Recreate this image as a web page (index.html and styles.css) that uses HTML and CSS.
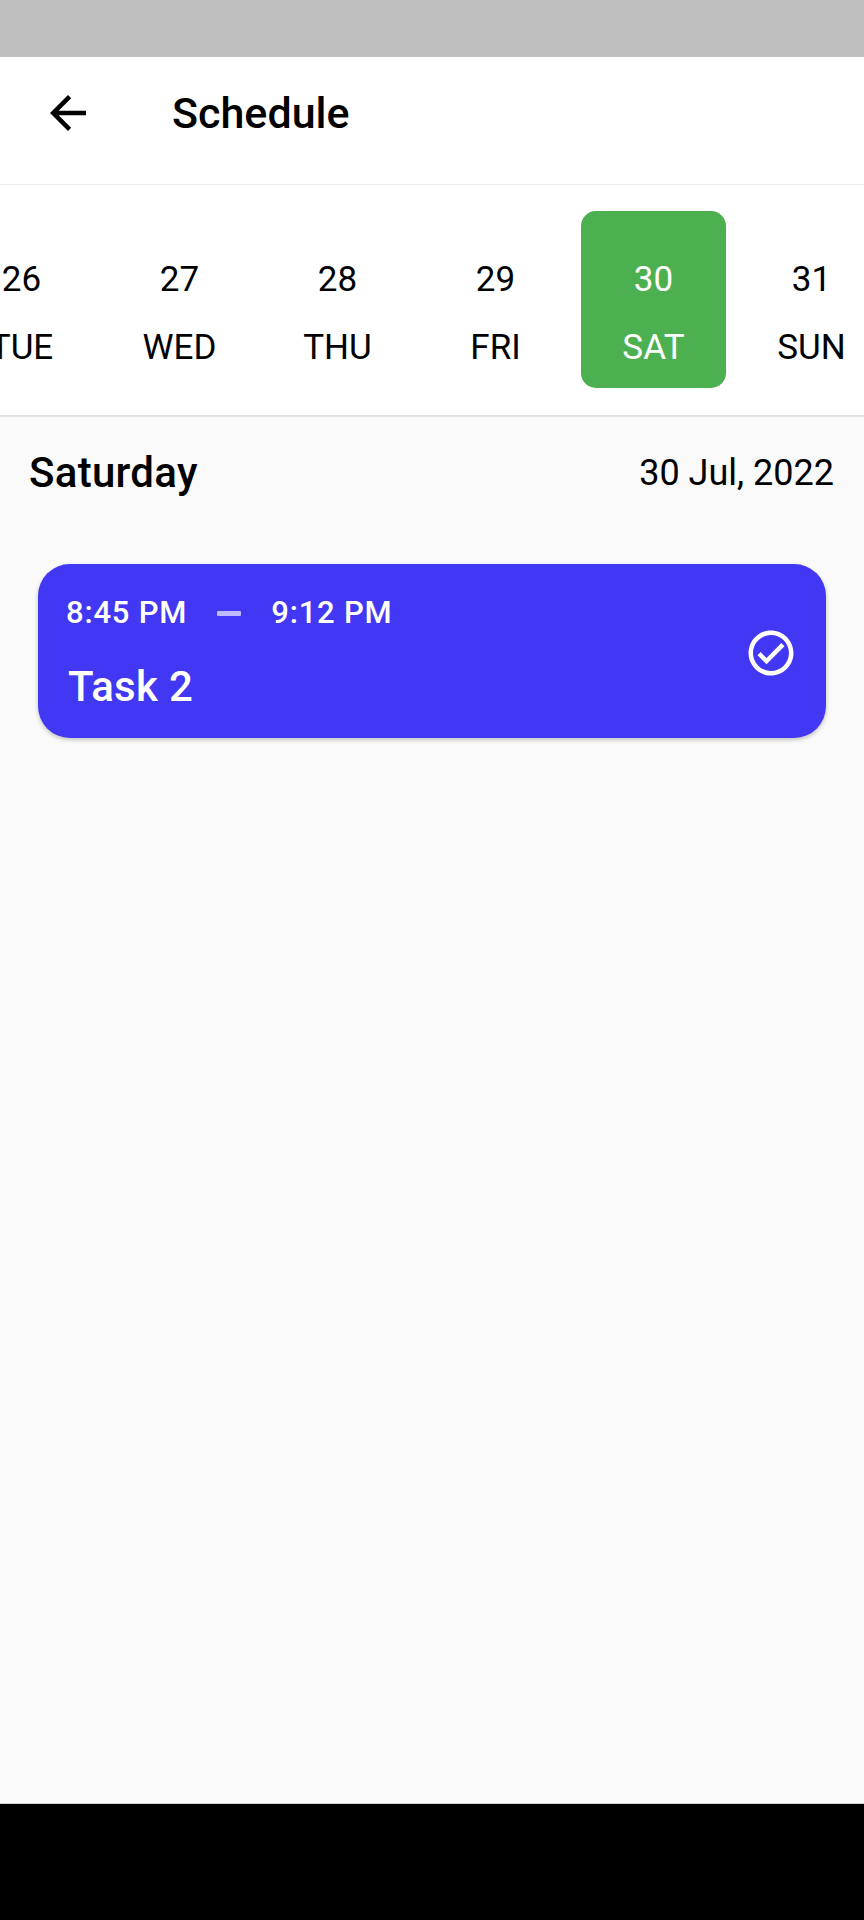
FILE: index.html
```html
<!DOCTYPE html>
<html lang="en">
<head>
<meta charset="utf-8">
<title>Schedule</title>
<link rel="stylesheet" href="styles.css">
</head>
<body>
  <div class="status-bar"></div>
  <header class="app-bar">
    <svg class="back-icon" viewBox="0 0 24 24" width="54" height="54" aria-hidden="true">
      <path d="M20 11H7.83l5.59-5.59L12 4l-8 8 8 8 1.41-1.41L7.83 13H20v-2z" fill="#000"/>
    </svg>
    <h1 class="title">Schedule</h1>
  </header>
  <section class="date-strip">
    <div class="day-row">
      <div class="day"><span class="day-num">26</span><span class="day-name">TUE</span></div>
      <div class="day"><span class="day-num">27</span><span class="day-name">WED</span></div>
      <div class="day"><span class="day-num">28</span><span class="day-name">THU</span></div>
      <div class="day"><span class="day-num">29</span><span class="day-name">FRI</span></div>
      <div class="day day-selected"><span class="day-num">30</span><span class="day-name">SAT</span></div>
      <div class="day"><span class="day-num">31</span><span class="day-name">SUN</span></div>
    </div>
  </section>
  <main class="content">
    <div class="day-header">
      <span class="weekday">Saturday</span>
      <span class="full-date">30 Jul, 2022</span>
    </div>
    <div class="task-card">
      <div class="task-info">
        <div class="task-time">
          <span>8:45 PM</span>
          <span class="time-dash"></span>
          <span>9:12 PM</span>
        </div>
        <div class="task-name">Task 2</div>
      </div>
      <svg class="check-icon" viewBox="0 0 24 24" width="54" height="54" aria-hidden="true">
        <path fill="#fff" d="M12 2C6.48 2 2 6.48 2 12s4.48 10 10 10 10-4.48 10-10S17.520 2 12 2zm0 18c-4.41 0-8-3.59-8-8s3.59-8 8-8 8 3.59 8 8-3.59 8-8 8zm4.59-12.42L10 14.170l-2.59-2.58L6 13l4 4 8-8z"/>
      </svg>
    </div>
  </main>
  <nav class="nav-bar"></nav>
</body>
</html>
```
FILE: styles.css
```css
* {
  box-sizing: border-box;
}

html, body {
  margin: 0;
  padding: 0;
}

body {
  width: 864px;
  height: 1920px;
  display: flex;
  flex-direction: column;
  font-family: Roboto, "Noto Sans", "Liberation Sans", sans-serif;
  color: #000;
  background: #fafafa;
  overflow: hidden;
}

.status-bar {
  height: 57px;
  flex: 0 0 57px;
  background: #bfbfbf;
}

.app-bar {
  height: 128px;
  flex: 0 0 128px;
  display: flex;
  align-items: center;
  padding-bottom: 15px;
  background: #fff;
  border-bottom: 1px solid #ebebeb;
}

.back-icon {
  margin-left: 41px;
  flex: 0 0 auto;
}

.title {
  margin: 0 0 0 77px;
  font-size: 43px;
  font-weight: 500;
  line-height: 50px;
}

.date-strip {
  height: 232px;
  flex: 0 0 232px;
  padding-top: 26px;
  background: #fff;
  border-bottom: 2px solid #e3e3e3;
  overflow: hidden;
}

.day-row {
  display: flex;
  gap: 13px;
  margin-left: -51px;
}

.day {
  flex: 0 0 145px;
  height: 177px;
  border-radius: 15px;
  display: flex;
  flex-direction: column;
  align-items: center;
  padding-top: 48px;
  gap: 26px;
  font-size: 35px;
  line-height: 42px;
  color: #000;
}

.day-selected {
  background: #4caf50;
  color: #fff;
}

.content {
  flex: 1;
  background: #fafafa;
}

.day-header {
  display: flex;
  justify-content: space-between;
  align-items: center;
  padding: 31px 30px 0 29px;
}

.weekday {
  font-size: 42px;
  font-weight: 500;
  line-height: 50px;
  letter-spacing: 0.3px;
}

.full-date {
  font-size: 36px;
  line-height: 50px;
}

.task-card {
  margin: 66px 38px 0 38px;
  height: 174px;
  display: flex;
  align-items: center;
  padding: 0 28px;
  border-radius: 32px;
  background: #4237f2;
  color: #fff;
  box-shadow: 0 2px 4px rgba(0, 0, 0, 0.22);
}

.task-info {
  flex: 1;
  padding: 31px 0 26px;
}

.task-time {
  display: flex;
  align-items: center;
  gap: 30px;
  font-size: 31px;
  font-weight: 500;
  line-height: 36px;
  letter-spacing: 0.8px;
}

.time-dash {
  width: 24px;
  height: 5px;
  border-radius: 1px;
  background: rgba(255, 255, 255, 0.65);
}

.task-name {
  margin: 31px 0 0 2px;
  font-size: 42px;
  font-weight: 500;
  line-height: 50px;
  letter-spacing: 0.3px;
}

.check-icon {
  flex: 0 0 auto;
  margin-top: 4px;
}

.nav-bar {
  height: 117px;
  flex: 0 0 117px;
  background: #000;
  border-top: 1px solid #cfcfcf;
}
```
